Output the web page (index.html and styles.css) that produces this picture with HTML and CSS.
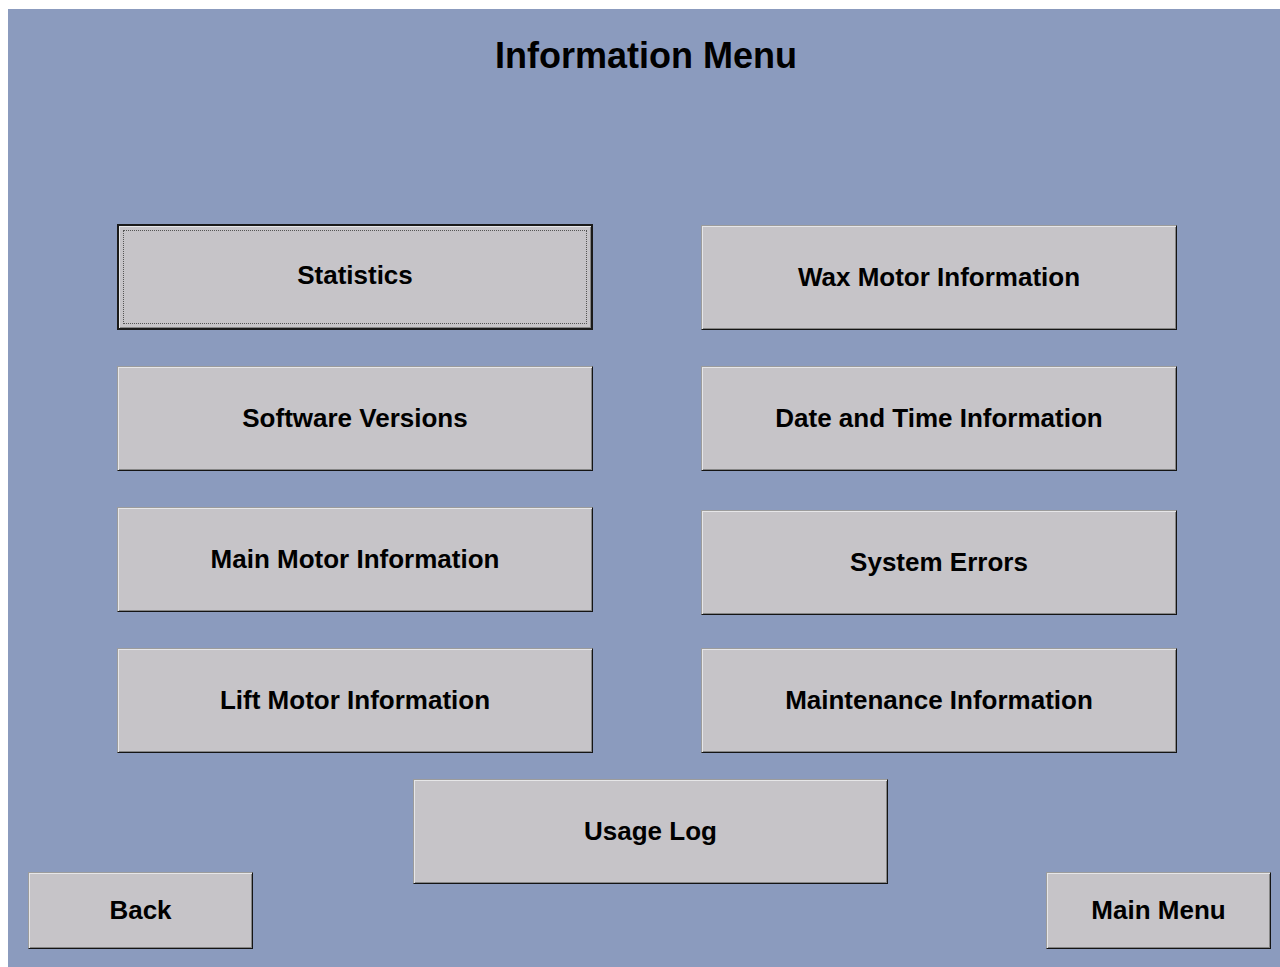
FILE: index.html
```html
<!DOCTYPE html>
<html>
<head>
<meta charset="utf-8">
<title>Information Menu</title>
<link rel="stylesheet" href="styles.css">
</head>
<body>
<div class="panel">
  <h1 class="title">Information Menu</h1>
  <div class="menu-grid">
    <button class="btn btn-focus"><span class="focus-ring">Statistics</span></button>
    <button class="btn">Wax Motor Information</button>
    <button class="btn">Software Versions</button>
    <button class="btn">Date and Time Information</button>
    <button class="btn">Main Motor Information</button>
    <button class="btn btn-shift">System Errors</button>
    <button class="btn">Lift Motor Information</button>
    <button class="btn">Maintenance Information</button>
  </div>
  <div class="footer">
    <button class="btn btn-small">Back</button>
    <button class="btn btn-usage">Usage Log</button>
    <button class="btn btn-small">Main Menu</button>
  </div>
</div>
</body>
</html>
```

FILE: styles.css
```css
html {
  overflow: hidden;
  height: 100%;
}
body {
  margin: 9px 0 0 8px;
  overflow: hidden;
  height: 100%;
  background: #ffffff;
  font-family: "Liberation Sans", Arial, sans-serif;
}
.panel {
  width: 1280px;
  height: 970px;
  background: #8b9bbe;
  box-sizing: border-box;
  padding-top: 27px;
}
.title {
  margin: 0;
  width: 1276px;
  text-align: center;
  font-size: 36px;
  line-height: 40px;
  font-weight: bold;
  color: #000;
}
.menu-grid {
  display: grid;
  grid-template-columns: 476px 476px;
  grid-auto-rows: 105px;
  column-gap: 108px;
  row-gap: 36px;
  margin-top: 149px;
  padding-left: 109px;
}
.btn {
  font-family: "Liberation Sans", Arial, sans-serif;
  font-size: 26px;
  font-weight: bold;
  color: #000;
  background: #c6c4c8;
  border: 1px solid;
  border-color: #9c9c9c #141414 #141414 #9c9c9c;
  box-shadow: inset 1px 1px 0 #e6e6e8, inset -1px -1px 0 #858585;
  padding: 0;
  margin: 0;
  display: flex;
  align-items: center;
  justify-content: center;
  box-sizing: border-box;
  width: 100%;
  height: 100%;
}
.btn-focus {
  border: 2px solid #1a1a1a;
  padding: 4px;
  margin-top: -1px;
  height: 106px;
}
.focus-ring {
  flex: 1;
  align-self: stretch;
  display: flex;
  align-items: center;
  justify-content: center;
  border: 1px dotted #555;
  padding-bottom: 3px;
}
.btn-shift {
  margin-top: 3px;
}
.footer {
  display: flex;
  align-items: flex-start;
  margin-top: 26px;
  padding-left: 20px;
  height: 170px;
}
.btn-small {
  width: 225px;
  height: 77px;
  margin-top: 93px;
  flex: none;
}
.btn-usage {
  width: 475px;
  height: 105px;
  margin-left: 160px;
  margin-right: 158px;
  flex: none;
}
```
